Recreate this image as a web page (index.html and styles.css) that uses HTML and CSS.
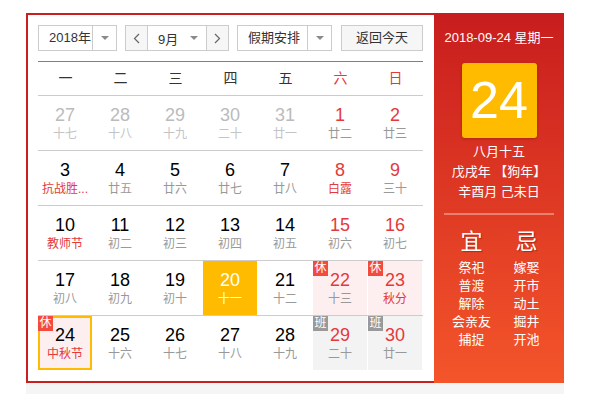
FILE: index.html
```html
<!DOCTYPE html>
<html>
  <head>
    <title>万年历</title>
    <link rel="stylesheet" href="styles.css">
  </head>
  <body>
    <div class="calendar">
      <div class="main">
        <div class="toolbar">
          <div class="select year">
            <span class="label">2018年</span>
            <span class="drop"><i class="caret"></i></span>
          </div>
          <div class="month">
            <span class="step"><svg width="7" height="11" viewBox="0 0 7 11"><polyline points="6,1 1.5,5.5 6,10" fill="none" stroke="#666" stroke-width="1.2"/></svg></span>
            <span class="month-label">9月<i class="caret"></i></span>
            <span class="step"><svg width="7" height="11" viewBox="0 0 7 11"><polyline points="1,1 5.5,5.5 1,10" fill="none" stroke="#666" stroke-width="1.2"/></svg></span>
          </div>
          <div class="select holiday">
            <span class="label">假期安排</span>
            <span class="drop"><i class="caret"></i></span>
          </div>
          <div class="today-btn">返回今天</div>
        </div>

        <div class="weekdays">
          <span>一</span><span>二</span><span>三</span><span>四</span><span>五</span>
          <span class="red">六</span><span class="red">日</span>
        </div>

        <div class="row">
          <div class="day other"><b>27</b><em>十七</em></div>
          <div class="day other"><b>28</b><em>十八</em></div>
          <div class="day other"><b>29</b><em>十九</em></div>
          <div class="day other"><b>30</b><em>二十</em></div>
          <div class="day other"><b>31</b><em>廿一</em></div>
          <div class="day weekend"><b>1</b><em>廿二</em></div>
          <div class="day weekend"><b>2</b><em>廿三</em></div>
        </div>
        <div class="row">
          <div class="day"><b>3</b><em class="fest">抗战胜...</em></div>
          <div class="day"><b>4</b><em>廿五</em></div>
          <div class="day"><b>5</b><em>廿六</em></div>
          <div class="day"><b>6</b><em>廿七</em></div>
          <div class="day"><b>7</b><em>廿八</em></div>
          <div class="day weekend"><b>8</b><em class="fest">白露</em></div>
          <div class="day weekend"><b>9</b><em>三十</em></div>
        </div>
        <div class="row">
          <div class="day"><b>10</b><em class="fest">教师节</em></div>
          <div class="day"><b>11</b><em>初二</em></div>
          <div class="day"><b>12</b><em>初三</em></div>
          <div class="day"><b>13</b><em>初四</em></div>
          <div class="day"><b>14</b><em>初五</em></div>
          <div class="day weekend"><b>15</b><em>初六</em></div>
          <div class="day weekend"><b>16</b><em>初七</em></div>
        </div>
        <div class="row">
          <div class="day"><b>17</b><em>初八</em></div>
          <div class="day"><b>18</b><em>初九</em></div>
          <div class="day"><b>19</b><em>初十</em></div>
          <div class="day selected"><b>20</b><em>十一</em></div>
          <div class="day"><b>21</b><em>十二</em></div>
          <div class="day weekend rest"><span class="badge">休</span><b>22</b><em>十三</em></div>
          <div class="day weekend rest"><span class="badge">休</span><b>23</b><em class="fest">秋分</em></div>
        </div>
        <div class="row">
          <div class="day rest today"><span class="badge">休</span><b>24</b><em class="fest">中秋节</em></div>
          <div class="day"><b>25</b><em>十六</em></div>
          <div class="day"><b>26</b><em>十七</em></div>
          <div class="day"><b>27</b><em>十八</em></div>
          <div class="day"><b>28</b><em>十九</em></div>
          <div class="day weekend work"><span class="badge">班</span><b>29</b><em>二十</em></div>
          <div class="day weekend work"><span class="badge">班</span><b>30</b><em>廿一</em></div>
        </div>
      </div>

      <div class="panel">
        <div class="panel-date">2018-09-24 星期一</div>
        <div class="big-day">24</div>
        <div class="lunar">
          <div>八月十五</div>
          <div>戊戌年 【狗年】</div>
          <div>辛酉月 己未日</div>
        </div>
        <div class="almanac">
          <div class="col">
            <h2>宜</h2>
            <div>祭祀</div>
            <div>普渡</div>
            <div>解除</div>
            <div>会亲友</div>
            <div>捕捉</div>
          </div>
          <div class="col">
            <h2>忌</h2>
            <div>嫁娶</div>
            <div>开市</div>
            <div>动土</div>
            <div>掘井</div>
            <div>开池</div>
          </div>
        </div>
      </div>
    </div>
    <div class="footer-strip"></div>
  </body>
</html>
```

FILE: styles.css
```css
body {
  margin: 0;
  background-color: #ffffff;
  color: #333333;
  font-family: "Liberation Sans", "Noto Sans CJK SC", sans-serif;
}

.calendar {
  display: flex;
  width: 534px;
  margin: 13px 0 0 26px;
  border: 2px solid #c9201f;
}

.main {
  width: 385px;
  padding: 10px 11px 11px 10px;
}

.footer-strip {
  width: 538px;
  height: 11px;
  margin-left: 26px;
  background-color: #f5f5f5;
}

/* toolbar */

.toolbar {
  display: flex;
  height: 26px;
  margin-bottom: 10px;
  font-size: 13px;
}

.select {
  display: flex;
  box-sizing: border-box;
  height: 26px;
  border: 1px solid #cccccc;
  margin-right: 8px;
}

.select .label {
  flex: 1;
  line-height: 24px;
  padding-left: 10px;
}

.select .drop {
  display: flex;
  align-items: center;
  justify-content: center;
  width: 23px;
  border-left: 1px solid #cccccc;
}

.year {
  width: 79px;
}

.holiday {
  width: 95px;
  margin-right: 9px;
}

.caret {
  display: inline-block;
  width: 0;
  height: 0;
  border-left: 4px solid transparent;
  border-right: 4px solid transparent;
  border-top: 4px solid #8a8a8a;
}

.month {
  display: flex;
  box-sizing: border-box;
  width: 104px;
  height: 26px;
  border: 1px solid #cccccc;
  margin-right: 8px;
}

.month .step {
  display: flex;
  align-items: center;
  justify-content: center;
  width: 21px;
  background-color: #f6f6f6;
}

.month-label {
  display: flex;
  align-items: center;
  justify-content: space-between;
  width: 60px;
  box-sizing: border-box;
  padding: 0 8px 0 10px;
  border-left: 1px solid #cccccc;
  border-right: 1px solid #cccccc;
}

.today-btn {
  box-sizing: border-box;
  width: 82px;
  height: 26px;
  line-height: 24px;
  text-align: center;
  border: 1px solid #cccccc;
  background-color: #f6f6f6;
}

/* grid */

.weekdays {
  display: flex;
  height: 33px;
  border-top: 1px solid #e85450;
  border-bottom: 1px solid #cccccc;
  font-size: 14px;
  line-height: 33px;
}

.weekdays span {
  width: 55px;
  text-align: center;
}

.weekdays .red {
  color: #e4393c;
}

.row {
  display: flex;
  border-top: 1px solid #cccccc;
}

.row:nth-child(3) {
  border-top: 0;
}

.day {
  position: relative;
  box-sizing: border-box;
  width: 54px;
  height: 54px;
  margin-right: 1px;
  padding-top: 8px;
  text-align: center;
}

.day b {
  display: block;
  font-weight: normal;
  font-size: 18px;
  line-height: 22px;
  color: #000000;
}

.day em {
  display: block;
  font-style: normal;
  font-size: 12px;
  line-height: 16px;
  color: #999999;
}

.day.other b {
  color: #bbbbbb;
}

.day.other em {
  color: #c4c4c4;
}

.day.weekend b {
  color: #e4393c;
}

.day em.fest {
  color: #e4393c;
}

.day.selected {
  background-color: #ffbb00;
}

.day.selected b,
.day.selected em {
  color: #ffffff;
}

.day.rest {
  background-color: #fdefef;
}

.day.work {
  background-color: #f3f3f3;
}

.day.today {
  border: 2px solid #ffbb00;
  padding-top: 6px;
}

.day.today b {
  color: #000000;
}

.badge {
  position: absolute;
  top: 0;
  left: 0;
  width: 15px;
  height: 15px;
  font-size: 12px;
  line-height: 15px;
  color: #ffffff;
  background-color: #f44a3e;
}

.day.today .badge {
  top: -2px;
  left: -2px;
}

.day.work .badge {
  background-color: #999999;
}

/* side panel */

.panel {
  width: 130px;
  margin: -2px -2px -2px 0;
  padding-top: 15px;
  color: #ffffff;
  text-align: center;
  background: linear-gradient(#c81d1e, #f4552a);
}

.panel-date {
  font-size: 13px;
  line-height: 20px;
}

.big-day {
  width: 75px;
  height: 75px;
  margin: 15px auto 4px;
  border-radius: 3px;
  background-color: #ffbb00;
  box-shadow: 0 1px 3px rgba(120, 20, 0, 0.4);
  font-size: 52px;
  line-height: 75px;
}

.lunar {
  font-size: 13px;
  line-height: 20px;
}

.almanac {
  display: flex;
  margin: 11px 10px 0;
  padding-top: 12px;
  border-top: 2px solid rgba(255, 255, 255, 0.35);
  font-size: 13px;
  line-height: 18px;
}

.almanac .col {
  width: 55px;
}

.almanac h2 {
  margin: 0 0 2px;
  font-size: 22px;
  font-weight: normal;
  line-height: 30px;
  text-shadow: 1px 1px 1px rgba(120, 20, 0, 0.5);
}
```
